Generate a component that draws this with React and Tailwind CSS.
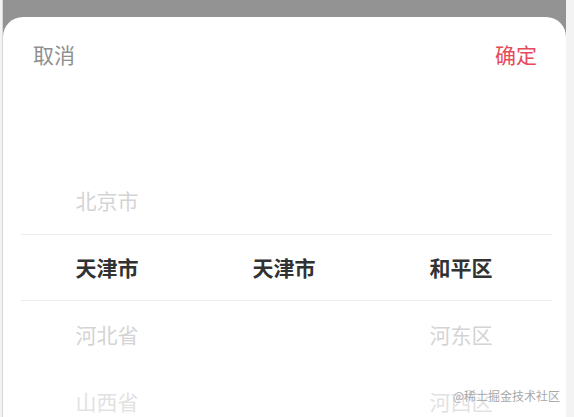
const cols = [
  ["", "北京市", "天津市", "河北省", "山西省"],
  ["", "", "天津市", "", ""],
  ["", "", "和平区", "河东区", "河西区"],
];

const rowTone = ["text-[#d4d4d4]", "font-bold text-[#323233]", "text-[#d4d4d4]", "text-[#e2e2e2]"];

const font = { fontFamily: '"Noto Sans CJK SC", "Noto Sans", sans-serif' };

export default function App() {
  return (
    <div className="relative flex h-[417px] w-full overflow-hidden bg-[#f3f3f3]" style={font}>
      <div className="w-[2px] bg-[#f3f3f3]" />
      <div className="w-px bg-[#d6d6d6]" />
      <div className="flex flex-1 flex-col bg-[#939393] pt-[17px]">
        <div className="flex-1 rounded-t-[20px] bg-white">
          <div className="flex h-[76px] items-center justify-between pl-[30px] pr-[29px] text-[21px]">
            <span className="text-[#8f8f8f]">取消</span>
            <span className="text-[#e6495a]">确定</span>
          </div>
          <div className="relative ml-[18px] mr-[14px] mt-[74px]">
            <div className="grid grid-cols-3">
              {cols.map((col, ci) => (
                <div key={ci} className="flex flex-col">
                  {col.slice(1).map((t, ri) => (
                    <div
                      key={ri}
                      className={"flex h-[67px] items-center justify-center pr-[5px] text-[21px] " + rowTone[ri]}
                    >
                      {t}
                    </div>
                  ))}
                </div>
              ))}
            </div>
            <div className="pointer-events-none absolute left-0 right-0 top-[67px] h-[67px] border-y border-[#ebedf0]" />
          </div>
        </div>
      </div>
      <div className="w-[8px] bg-[#f3f3f3]" />
      <div className="absolute bottom-[12px] right-[14px] text-[12px] text-[#a8a8a8]" style={{ textShadow: "0 0 2px #fff" }}>
        @稀土掘金技术社区
      </div>
    </div>
  );
}
